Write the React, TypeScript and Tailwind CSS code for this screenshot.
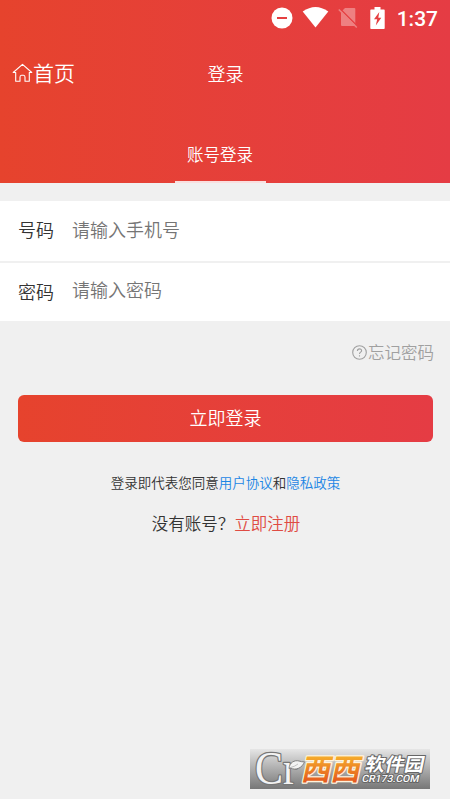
import { useState } from "react";

function StatusBar() {
    return (
        <div className="flex h-9 items-center justify-end pr-3 text-white">
            {/* do not disturb */}
            <svg className="mr-[9px]" width="22" height="22" viewBox="0 0 22 22">
                <circle cx="11" cy="11" r="10.5" fill="currentColor" />
                <path d="M6 11h10" stroke="#e53f41" strokeWidth="2" />
            </svg>
            {/* wifi */}
            <svg className="mr-[9px]" width="27" height="22" viewBox="0 0 27 22">
                <path d="M0.7 4.6Q13.5 -4.4 26.3 4.6L13.5 20.5Z" fill="currentColor" />
            </svg>
            {/* no sim */}
            <svg className="mr-[12px]" width="20" height="22" viewBox="0 0 20 22">
                <path d="M7 1H16.3Q17.3 1 17.3 2V18Q17.3 19 16.3 19H4Q3 19 3 18V5Z" fill="#ee8081" />
                <path d="M2 1.8L19.8 19.6" stroke="#e53e42" strokeWidth="1.4" />
                <path d="M0.8 2.5L18.8 20.5" stroke="#ee8081" strokeWidth="1.5" />
            </svg>
            {/* battery */}
            <svg className="mr-[12px] mb-px" width="15" height="22" viewBox="0 0 15 22">
                <path d="M4.5 0h6v2.5H14a.7.7 0 0 1 .7.7v18a.8.8 0 0 1-.8.8H1.1a.8.8 0 0 1-.8-.8v-18a.7.7 0 0 1 .7-.7h3.5Z" fill="currentColor" />
                <path d="M9.3 5L4 12.2H7.2L5.8 18.5L11.3 10.8H8.3Z" fill="#e53f41" />
            </svg>
            <span className="mt-[2px] font-[Roboto,sans-serif] text-[21px] leading-9 font-medium">1:37</span>
        </div>
    );
}

function SiteBadge() {
    return (
        <div className="h-10 w-[180px] bg-linear-to-b from-[#e6e6e6] to-[#777777]">
            <svg className="overflow-visible" width="180" height="40" viewBox="0 0 180 40">
                <defs>
                    <linearGradient id="badgeOrange" x1="0" y1="0" x2="0" y2="1">
                        <stop offset="0.25" stopColor="#f5ad2c" />
                        <stop offset="0.9" stopColor="#e2501c" />
                    </linearGradient>
                </defs>

                {/* dark rim first, white letters over it */}
                <g strokeLinejoin="round">
                    <text
                        x="5"
                        y="34.5"
                        fontSize="46"
                        fontFamily="Liberation Serif, serif"
                        textLength="42"
                        lengthAdjust="spacingAndGlyphs"
                        fill="#f3f3f3"
                        stroke="#777"
                        strokeWidth="2.6"
                        paintOrder="stroke"
                    >
                        Cr
                    </text>
                    {/* leaf on the r */}
                    <path
                        d="M39 19.5C39.5 13.5 44.5 10.8 49 12Q51.5 13 54.5 12.8C52.5 18.5 46 22 40.5 19Z"
                        fill="#f3f3f3"
                        stroke="#777"
                        strokeWidth=".9"
                    />
                    <path d="M40.5 18.5Q45 17.5 48 15" stroke="#aaa" strokeWidth=".7" fill="none" />
                </g>

                <g transform="skewX(-12)" strokeLinejoin="round" paintOrder="stroke">
                    <text
                        x="57"
                        y="31"
                        fontSize="29.5"
                        fontWeight="700"
                        fill="url(#badgeOrange)"
                        stroke="#fff3dc"
                        strokeWidth="2.6"
                        textLength="59"
                        lengthAdjust="spacingAndGlyphs"
                    >
                        西西
                    </text>
                    <g fill="#fff" stroke="#666" strokeWidth="2">
                        <text x="119" y="22.5" fontSize="18.5" fontWeight="700" textLength="59" lengthAdjust="spacingAndGlyphs">
                            软件园
                        </text>
                        <text
                            x="118.5"
                            y="33"
                            fontSize="10"
                            fontWeight="500"
                            fontFamily="Roboto, sans-serif"
                            textLength="57"
                            lengthAdjust="spacingAndGlyphs"
                        >
                            CR173.COM
                        </text>
                    </g>
                </g>
            </svg>
        </div>
    );
}

export default function App() {
    const [phone, setPhone] = useState("");
    const [password, setPassword] = useState("");

    return (
        <main className="flex h-[799px] w-full flex-col bg-[#f0f0f0] font-['Noto_Sans_CJK_SC',sans-serif] font-[350] text-[#333]">
            <header className="h-[183px] bg-linear-to-r from-[#e6432d] to-[#e53c44] text-white">
                <StatusBar />

                {/* title row */}
                <div className="grid h-[73px] grid-cols-[1fr_auto_1fr] items-center">
                    <a href="#" className="flex items-center pl-3 text-[21px] leading-none">
                        <svg width="21" height="20" viewBox="0 0 21 20" fill="none" stroke="currentColor" strokeWidth="1.1" strokeLinejoin="round" strokeLinecap="round">
                            <path d="M3.7 9.5H1.2L10.5 1.3L19.8 9.5H17.3V18.2H13V14.2Q13 12.2 11.5 12.2H9.5Q8 12.2 8 14.2V18.2H3.7Z" />
                        </svg>
                        首页
                    </a>
                    <h1 className="pl-px text-lg leading-none">登录</h1>
                </div>

                {/* tab */}
                <div className="flex h-[74px] justify-center pr-[9px]">
                    <div className="flex w-[91px] justify-center border-b-2 border-[#f9dfdf] pt-5 pr-px text-[16.5px] leading-[50px]">
                        账号登录
                    </div>
                </div>
            </header>

            <form onSubmit={(e) => e.preventDefault()}>
                <div className="mt-[18px] bg-white">
                    <div className="flex h-[62px] border-b-2 border-[#f0f0f0] pl-[18px] text-lg">
                        <label htmlFor="phone" className="w-[54px] leading-[56px]">号码</label>
                        <input
                            id="phone"
                            className="h-14 flex-1 outline-none placeholder:text-[#757575]"
                            placeholder="请输入手机号"
                            value={phone}
                            onChange={(e) => setPhone(e.target.value)}
                        />
                    </div>
                    <div className="flex h-[58px] pl-[18px] text-lg">
                        <label htmlFor="password" className="w-[54px] leading-[56px]">密码</label>
                        <input
                            id="password"
                            type="password"
                            className="h-[52px] flex-1 outline-none placeholder:text-[#757575]"
                            placeholder="请输入密码"
                            value={password}
                            onChange={(e) => setPassword(e.target.value)}
                        />
                    </div>
                </div>

                <div className="flex h-[74px] justify-end pr-4">
                    <a href="#" className="flex h-[62px] items-center text-[16.5px] text-[#a0a0a0]">
                        <svg className="mr-px" width="15" height="15" viewBox="0 0 15 15" fill="none" stroke="currentColor" strokeWidth="1.1">
                            <circle cx="7.5" cy="7.5" r="6.8" />
                            <path d="M5.4 6.1C5.4 3 9.8 3.3 9.6 5.8C9.4 7.2 7.5 7.2 7.5 9M7.5 10.2V11.4" />
                        </svg>
                        忘记密码
                    </a>
                </div>

                <button
                    type="submit"
                    className="mx-[18px] block h-[47px] w-[415px] rounded-md bg-linear-to-r from-[#e6432d] to-[#e53c44] pb-[3px] text-lg text-white"
                >
                    立即登录
                </button>
            </form>

            <p className="mt-[30px] pl-px text-center text-[13.5px] leading-5">
                登录即代表您同意
                <a href="#" className="text-[#1c86e5]">用户协议</a>
                和
                <a href="#" className="text-[#1c86e5]">隐私政策</a>
            </p>
            <p className="mt-[19px] flex justify-center pl-0.5 text-[16.5px] leading-6">
                没有账号？
                <a href="#" className="text-[#df4b43]">立即注册</a>
            </p>

            <footer className="mt-auto mr-5 mb-[10px] flex justify-end">
                <SiteBadge />
            </footer>
        </main>
    );
}
